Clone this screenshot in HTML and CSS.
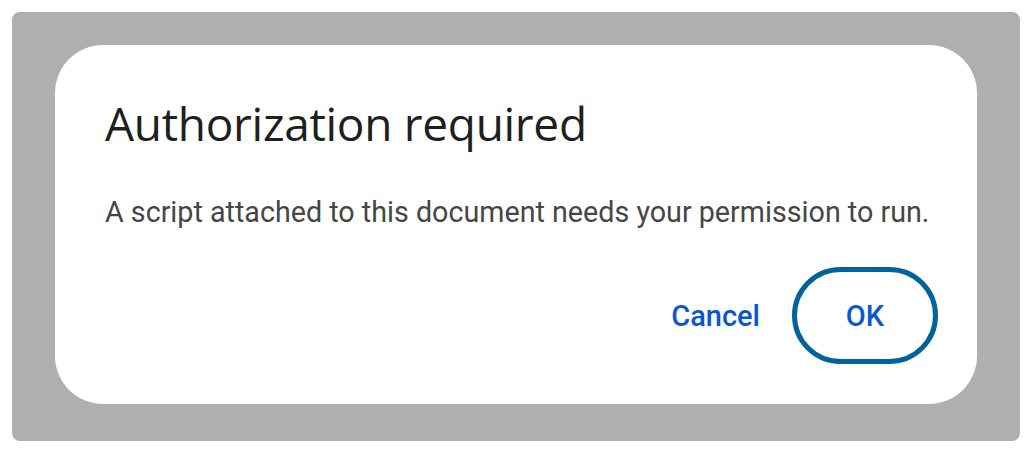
FILE: index.html
```html
<!DOCTYPE html>
<html>
<head>
<meta charset="utf-8">
<link rel="stylesheet" href="styles.css">
</head>
<body>
<div class="backdrop">
  <div class="dialog">
    <h1 class="title">Authorization required</h1>
    <p class="message">A script attached to this document needs your permission to run.</p>
    <div class="actions">
      <button class="btn btn-text">Cancel</button>
      <button class="btn btn-outlined">OK</button>
    </div>
  </div>
</div>
</body>
</html>
```

FILE: styles.css
```css
html, body {
  margin: 0;
  padding: 0;
  background: #ffffff;
}
body {
  padding: 12px;
  width: 1008px;
  font-family: Roboto, "Open Sans", sans-serif;
}
.backdrop {
  background: #afafaf;
  border-radius: 8px;
  height: 429px;
  padding: 33px 43px 0 43px;
  box-sizing: border-box;
}
.dialog {
  background: #ffffff;
  border-radius: 48px;
  height: 359px;
  box-sizing: border-box;
  padding: 50px 39px 0 50px;
  display: flex;
  flex-direction: column;
}
.title {
  margin: 0;
  font-family: "Open Sans", Roboto, sans-serif;
  font-weight: 400;
  font-size: 46px;
  line-height: 56px;
  color: #1f1f1f;
  letter-spacing: -0.3px;
}
.message {
  margin: 43px 0 0 0;
  font-size: 28.7px;
  line-height: 36px;
  color: #444746;
}
.actions {
  margin-top: 37px;
  display: flex;
  justify-content: flex-end;
  align-items: center;
  gap: 32px;
}
.btn {
  font-family: Roboto, sans-serif;
  font-weight: 500;
  font-size: 29px;
  color: #0b57d0;
  background: transparent;
  cursor: pointer;
}
.btn-text {
  border: none;
  padding: 0;
}
.btn-outlined {
  width: 146px;
  height: 97px;
  border: 5px solid #00639b;
  border-radius: 49px;
  box-sizing: border-box;
}
```
